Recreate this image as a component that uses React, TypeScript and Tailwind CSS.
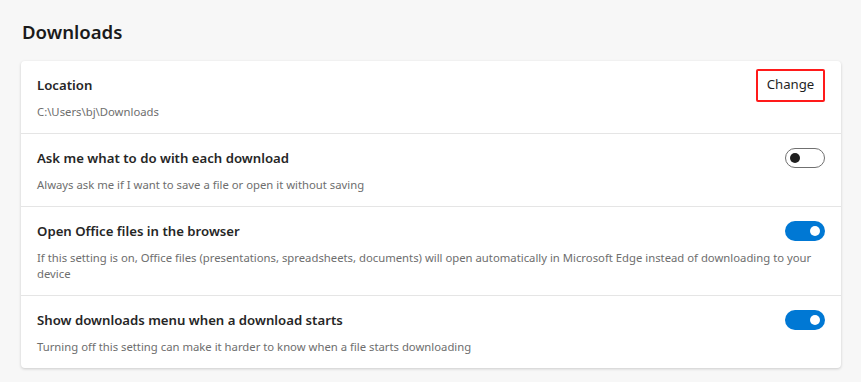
import { useState } from "react";

type Row = {
  title: string;
  desc: string;
  on?: boolean;
  change?: boolean;
};

const rows: Row[] = [
  { title: "Location", desc: "C:\\Users\\bj\\Downloads", change: true },
  {
    title: "Ask me what to do with each download",
    desc: "Always ask me if I want to save a file or open it without saving",
    on: false,
  },
  {
    title: "Open Office files in the browser",
    desc: "If this setting is on, Office files (presentations, spreadsheets, documents) will open automatically in Microsoft Edge instead of downloading to your device",
    on: true,
  },
  {
    title: "Show downloads menu when a download starts",
    desc: "Turning off this setting can make it harder to know when a file starts downloading",
    on: true,
  },
];

function Toggle({ initial }: { initial: boolean }) {
  const [on, setOn] = useState(initial);
  return (
    <button
      onClick={() => setOn(!on)}
      className={
        on
          ? "flex h-5 w-10 shrink-0 items-center justify-end rounded-full bg-[#0078d4] px-[5px]"
          : "flex h-5 w-10 shrink-0 items-center justify-start rounded-full border border-[#707070] bg-white px-[4px]"
      }
    >
      <span
        className={
          on ? "h-[10px] w-[10px] rounded-full bg-white" : "h-[10px] w-[10px] rounded-full bg-[#1f1f1f]"
        }
      />
    </button>
  );
}

export default function App() {
  return (
    <div
      className="min-h-[382px] bg-[#f7f7f7] pl-[21px] pr-[20px] pt-[19px] pb-[14px]"
      style={{ fontFamily: '"Noto Sans", "Open Sans", sans-serif' }}
    >
      <h1 className="mb-[16px] pl-[1px] text-[18.6px] font-semibold leading-[26px] text-[#1b1b1b]">
        Downloads
      </h1>
      <div className="overflow-hidden rounded-[4px] bg-white shadow-[0_1px_3px_rgba(0,0,0,0.18)]">
        {rows.map((row, i) => (
          <div
            key={row.title}
            className={
              i === 0
                ? "pl-4 pr-4 pt-[14px] pb-[13px]"
                : "border-t border-[#e5e5e5] pl-4 pr-4 pt-[14px] pb-[13px]"
            }
          >
            <div className="flex h-5 items-center justify-between gap-6">
              <div className="text-[13.2px] font-semibold leading-5 text-[#262626]">{row.title}</div>
              {row.change ? (
                <button className="h-[33px] w-[69px] shrink-0 rounded-[2px] border-2 border-[#ff1a1a] text-[13.2px] text-[#1f1f1f]">
                  Change
                </button>
              ) : (
                <Toggle initial={!!row.on} />
              )}
            </div>
            <div className="mt-[9px] pr-[10px] text-[11.3px] leading-4 text-[#6e6e6e]">{row.desc}</div>
          </div>
        ))}
      </div>
    </div>
  );
}
